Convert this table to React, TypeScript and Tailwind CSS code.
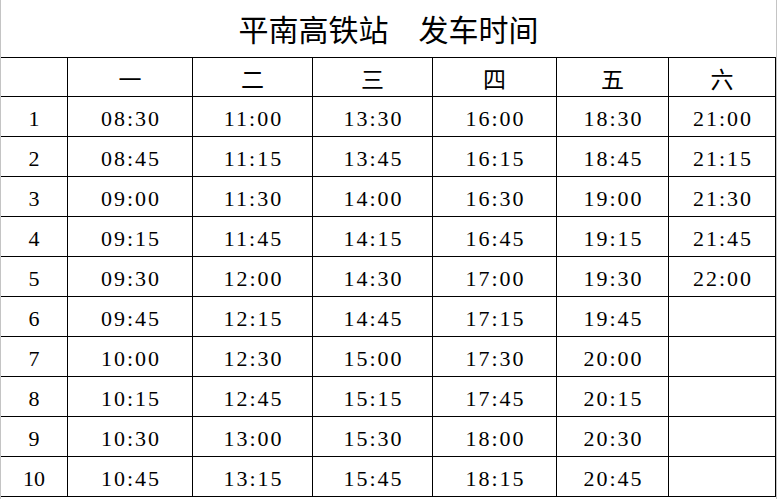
const days = ["一", "二", "三", "四", "五", "六"];

const times = [
  ["08:30", "11:00", "13:30", "16:00", "18:30", "21:00"],
  ["08:45", "11:15", "13:45", "16:15", "18:45", "21:15"],
  ["09:00", "11:30", "14:00", "16:30", "19:00", "21:30"],
  ["09:15", "11:45", "14:15", "16:45", "19:15", "21:45"],
  ["09:30", "12:00", "14:30", "17:00", "19:30", "22:00"],
  ["09:45", "12:15", "14:45", "17:15", "19:45", ""],
  ["10:00", "12:30", "15:00", "17:30", "20:00", ""],
  ["10:15", "12:45", "15:15", "17:45", "20:15", ""],
  ["10:30", "13:00", "15:30", "18:00", "20:30", ""],
  ["10:45", "13:15", "15:45", "18:15", "20:45", ""],
];

const cols = "grid grid-cols-[67px_125px_120px_120px_124px_112px_107px]";
const cell = "flex items-center justify-center border-r border-b border-black";

export default function App() {
  return (
    <div className="h-[499px] w-[777px] overflow-hidden border-l border-r border-[#c4c4c4] bg-white text-black">
      {/* Title */}
      <div className="flex h-[57px] items-center justify-center pb-[1px] font-['Noto_Sans_CJK_SC',sans-serif] text-[30px] leading-none">
        平南高铁站　发车时间
      </div>

      {/* Header */}
      <div className={`${cols} h-[40px] border-t border-black font-['Noto_Sans_CJK_SC',serif] text-[23px]`}>
        <div className={cell} />
        {days.map((d) => (
          <div key={d} className={`${cell} pt-[2px]`}>
            {d}
          </div>
        ))}
      </div>

      {/* Rows */}
      {times.map((row, i) => (
        <div
          key={i}
          className={`${cols} h-[40px] font-['Liberation_Serif',serif] text-[22px]`}
        >
          <div className={`${cell} pt-[3px]`}>{i + 1}</div>
          {row.map((t, j) => (
            <div key={j} className={`${cell} pl-[2px] pt-[3px] tracking-[2px]`}>
              {t}
            </div>
          ))}
        </div>
      ))}
    </div>
  );
}
